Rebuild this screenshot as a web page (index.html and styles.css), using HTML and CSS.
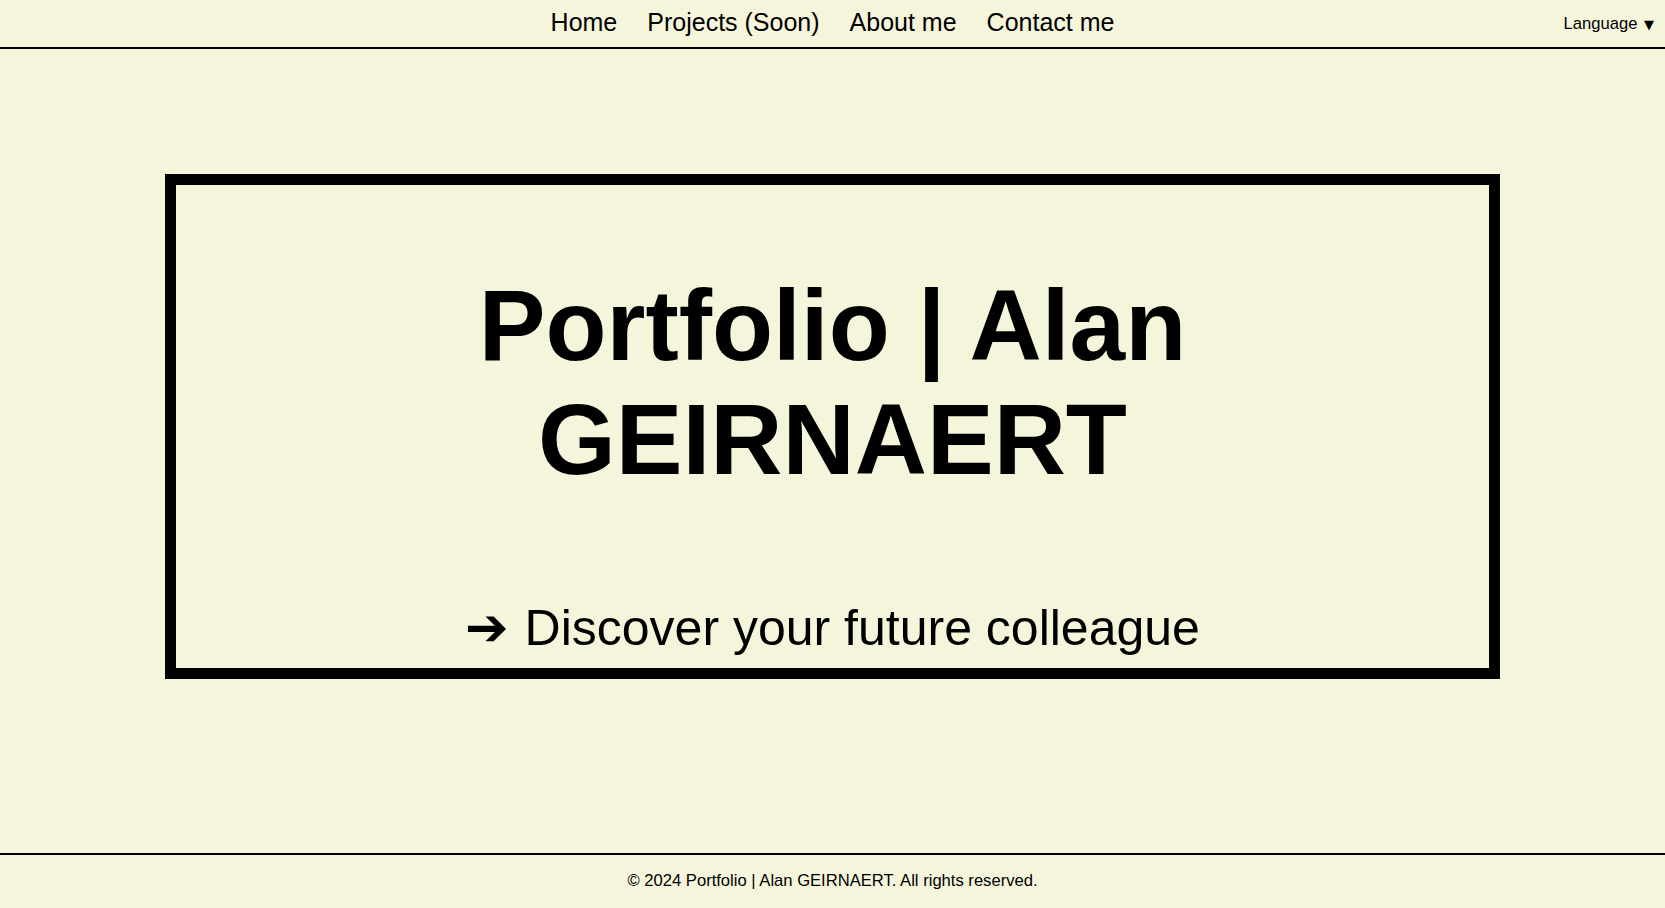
FILE: index.html
```html
<!DOCTYPE html>
<html lang="en">
<head>
<meta charset="utf-8">
<title>Portfolio | Alan GEIRNAERT</title>
<link rel="stylesheet" href="styles.css">
</head>
<body>
<header class="site-header">
  <div class="header-spacer"></div>
  <nav class="main-nav">
    <a href="#" class="nav-link">Home</a>
    <a href="#" class="nav-link">Projects (Soon)</a>
    <a href="#" class="nav-link">About me</a>
    <a href="#" class="nav-link">Contact me</a>
  </nav>
  <div class="lang">
    <button class="lang-btn">Language <span class="caret">▼</span></button>
  </div>
</header>
<main class="content">
  <section class="hero">
    <h1 class="hero-title">Portfolio | Alan<br>GEIRNAERT</h1>
    <p class="hero-sub"><span class="arrow">➔</span> Discover your future colleague</p>
  </section>
</main>
<footer class="site-footer">
  <p class="footer-text">© 2024 Portfolio | Alan GEIRNAERT. All rights reserved.</p>
</footer>
</body>
</html>
```
FILE: styles.css
```css
html, body {
  margin: 0;
  padding: 0;
}

body {
  background: #f5f5dc;
  color: #000;
  font-family: "Liberation Sans", Arial, sans-serif;
  height: 100vh;
  display: flex;
  flex-direction: column;
  overflow: hidden;
}

.site-header {
  height: 47px;
  border-bottom: 2px solid #000;
  display: grid;
  grid-template-columns: 1fr auto 1fr;
  align-items: center;
  flex: none;
}

.main-nav {
  display: flex;
  gap: 30px;
  padding-bottom: 2px;
}

.nav-link {
  font-size: 25px;
  color: #000;
  text-decoration: none;
}

.lang {
  justify-self: end;
  padding-right: 11px;
}

.lang-btn {
  background: none;
  border: none;
  padding: 0;
  font-family: "Liberation Sans", Arial, sans-serif;
  font-size: 16.6px;
  color: #000;
  cursor: pointer;
}

.caret {
  font-family: "DejaVu Sans", sans-serif;
  font-size: 13px;
  margin-left: 2px;
}

.content {
  flex: 1;
  display: flex;
  flex-direction: column;
  align-items: center;
  padding-top: 125px;
}

.hero {
  box-sizing: border-box;
  width: 1335px;
  height: 505px;
  border: 11px solid #000;
  display: flex;
  flex-direction: column;
  align-items: center;
  padding-top: 83px;
}

.hero-title {
  margin: 0;
  font-size: 100px;
  line-height: 114px;
  font-weight: bold;
  text-align: center;
}

.hero-sub {
  margin: 101px 0 0;
  font-size: 50px;
  text-align: center;
}

.arrow {
  font-family: "DejaVu Sans", sans-serif;
  font-size: 52px;
  margin-right: 2px;
}

.site-footer {
  flex: none;
  border-top: 2px solid #000;
  padding: 16px 0 17px;
  text-align: center;
}

.footer-text {
  margin: 0;
  font-size: 16.6px;
}
```
